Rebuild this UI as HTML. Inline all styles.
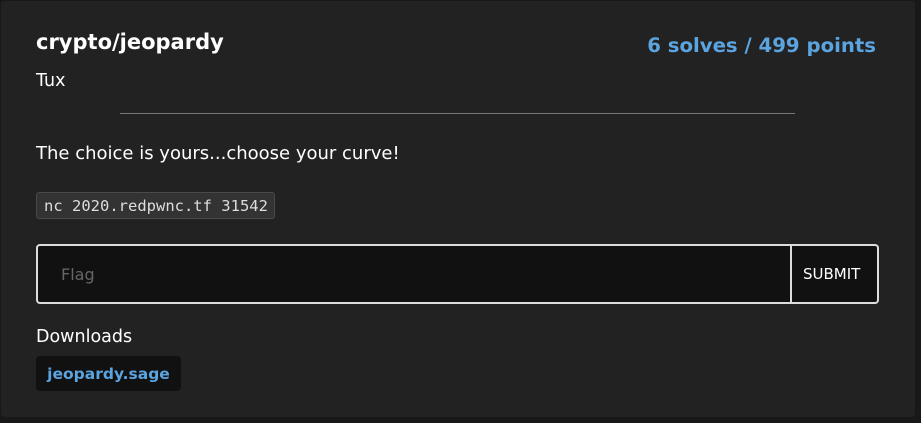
<!DOCTYPE html>
<html><head><style>
html,body{margin:0;padding:0;background:#181818;width:921px;height:423px;overflow:hidden;font-family:"DejaVu Sans",sans-serif;color:#fff}
.card{position:absolute;left:1px;top:1px;width:914px;height:416px;background:#222;border-radius:3px}
.abs{position:absolute;white-space:nowrap}
</style></head><body>
<div class="card"></div>
<div class="abs" style="left:36px;top:30px;font-size:21px;font-weight:bold;">crypto/jeopardy</div>
<div class="abs" style="right:45px;top:34px;font-size:19.7px;font-weight:bold;color:#5ba4e0">6 solves / 499 points</div>
<div class="abs" style="left:36px;top:71px;font-size:17.5px;">Tux</div>
<div class="abs" style="left:120px;top:113px;width:675px;height:1px;background:#777"></div>
<div class="abs" style="left:36px;top:143px;font-size:18px;">The choice is yours...choose your curve!</div>
<div class="abs" style="left:36px;top:192px;width:237px;height:25px;border:1px solid #4a4a4a;background:#333;border-radius:3px;font-family:'DejaVu Sans Mono',monospace;font-size:15.5px;color:#ddd;line-height:26px;text-indent:7px">nc 2020.redpwnc.tf 31542</div>
<div class="abs" style="left:36px;top:244px;width:839px;height:56px;border:2px solid #ddd;border-radius:4px;background:#111"></div>
<div class="abs" style="left:790px;top:246px;width:2px;height:56px;background:#ddd"></div>
<div class="abs" style="left:61px;top:265px;font-size:16px;color:#666">Flag</div>
<div class="abs" style="left:803px;top:265px;font-size:15px;color:#fff">SUBMIT</div>
<div class="abs" style="left:36px;top:327px;font-size:17.5px;">Downloads</div>
<div class="abs" style="left:36px;top:356px;width:145px;height:35px;background:#111;border-radius:4px;color:#5ba4e0;font-weight:bold;font-size:15.5px;line-height:36px;text-align:center">jeopardy.sage</div>
</body></html>
